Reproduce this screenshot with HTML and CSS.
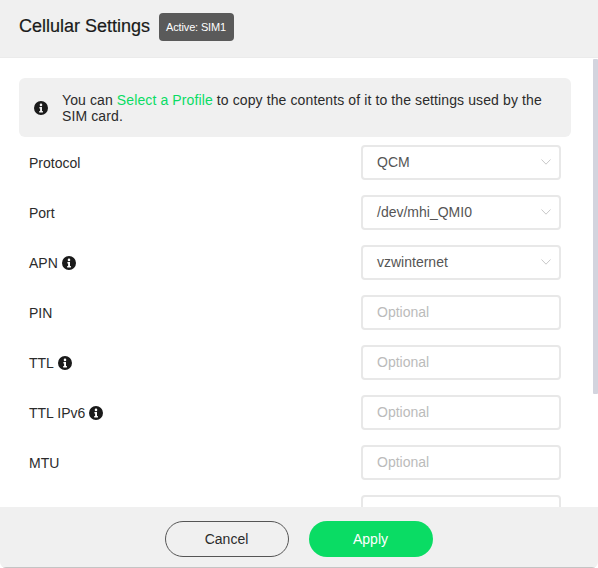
FILE: index.html
```html
<!DOCTYPE html>
<html lang="en">
<head>
    <meta charset="UTF-8">
    <meta name="viewport" content="width=device-width, initial-scale=1.0">
    <title>Cellular Settings</title>
    <link rel="stylesheet" href="styles.css">
</head>
<body>
    <svg class="icon-defs" width="0" height="0">
        <symbol id="info" viewBox="0 0 14 14">
            <path fill-rule="evenodd" d="M7 0a7 7 0 1 0 0 14A7 7 0 0 0 7 0ZM7 2.6a1.3 1.3 0 1 1 0 2.6 1.3 1.3 0 0 1 0-2.6ZM5.4 6h2.6v4h.9v1.4H5.2V10h.9V7.4h-.7Z"/>
        </symbol>
        <symbol id="chevron" viewBox="0 0 10 6">
            <path d="M0.5 0.5 5 5.2 9.5 0.5" fill="none" stroke="#c8c8c8" stroke-width="1"/>
        </symbol>
    </svg>
    <div class="modal">
        <header class="modal-header">
            <h1>Cellular Settings</h1>
            <span class="badge">Active: SIM1</span>
        </header>
        <div class="modal-main">
            <div class="modal-body">
                <div class="notice">
                    <svg class="notice-icon"><use href="#info"/></svg>
                    <p>You can <a href="#">Select a Profile</a> to copy the contents of it to the settings used by the SIM card.</p>
                </div>
                <form class="settings">
                    <div class="row">
                        <label>Protocol</label>
                        <div class="control select">QCM<svg class="chevron"><use href="#chevron"/></svg></div>
                    </div>
                    <div class="row">
                        <label>Port</label>
                        <div class="control select">/dev/mhi_QMI0<svg class="chevron"><use href="#chevron"/></svg></div>
                    </div>
                    <div class="row">
                        <label>APN <svg class="hint"><use href="#info"/></svg></label>
                        <div class="control select">vzwinternet<svg class="chevron"><use href="#chevron"/></svg></div>
                    </div>
                    <div class="row">
                        <label>PIN</label>
                        <input class="control" type="text" placeholder="Optional">
                    </div>
                    <div class="row">
                        <label>TTL <svg class="hint"><use href="#info"/></svg></label>
                        <input class="control" type="text" placeholder="Optional">
                    </div>
                    <div class="row">
                        <label>TTL IPv6 <svg class="hint"><use href="#info"/></svg></label>
                        <input class="control" type="text" placeholder="Optional">
                    </div>
                    <div class="row">
                        <label>MTU</label>
                        <input class="control" type="text" placeholder="Optional">
                    </div>
                    <div class="row">
                        <label>Auth</label>
                        <div class="control select">NONE<svg class="chevron"><use href="#chevron"/></svg></div>
                    </div>
                </form>
            </div>
            <div class="scroll-thumb"></div>
        </div>
        <footer class="modal-footer">
            <button class="btn btn-cancel" type="button">Cancel</button>
            <button class="btn btn-apply" type="button">Apply</button>
        </footer>
    </div>
</body>
</html>
```

FILE: styles.css
```css
* {
    box-sizing: border-box;
}
body {
    margin: 0;
    font-family: "Liberation Sans", Arial, sans-serif;
    font-size: 14px;
    color: #2b2b2b;
    background-color: #fff;
}
.icon-defs {
    display: block;
    height: 0;
}
.modal {
    height: 568px;
    display: flex;
    flex-direction: column;
    overflow: hidden;
    border-radius: 0 0 6px 6px;
}
.modal-header {
    height: 58px;
    flex: none;
    display: flex;
    align-items: center;
    gap: 9px;
    padding: 0 19px 4px;
    background-color: #f0f0f0;
    border-bottom: 1px solid #ebebeb;
}
.modal-header h1 {
    margin: 0;
    font-size: 18px;
    font-weight: normal;
    color: #1a1a1a;
    -webkit-text-stroke: 0.2px #1a1a1a;
}
.badge {
    height: 28px;
    width: 75px;
    padding: 0 7px;
    display: flex;
    align-items: center;
    font-size: 11px;
    letter-spacing: -0.15px;
    white-space: nowrap;
    color: #fff;
    background-color: #5a5a5a;
    border-radius: 4px;
}
.modal-main {
    flex: 1;
    min-height: 0;
    position: relative;
}
.modal-body {
    height: 100%;
    overflow: hidden;
    padding: 20px 27px 20px 19px;
}
.scroll-thumb {
    position: absolute;
    top: 1px;
    right: 0;
    width: 5px;
    height: 335px;
    background-color: #d3d4de;
    border-radius: 1px;
}
.notice {
    display: flex;
    align-items: center;
    gap: 14px;
    height: 59px;
    padding: 0 15px;
    background-color: #f0f0f0;
    border-radius: 6px;
}
.notice-icon {
    width: 14px;
    height: 14px;
    flex: none;
    fill: #1a1a1a;
}
.notice p {
    margin: 0;
    line-height: 16px;
    letter-spacing: 0.11px;
}
.notice a {
    color: #0adc64;
    text-decoration: none;
}
.settings {
    padding: 8px 10px 0;
}
.row {
    display: flex;
    align-items: center;
    justify-content: space-between;
    height: 35px;
    margin-bottom: 15px;
}
.row label {
    display: flex;
    align-items: center;
    gap: 4px;
}
.hint {
    width: 14px;
    height: 14px;
    fill: #1a1a1a;
}
.control {
    width: 200px;
    height: 35px;
    padding: 0 14px 2px;
    font-family: inherit;
    font-size: 14px;
    color: #555;
    background-color: #fff;
    border: 2px solid #e8e8e8;
    border-radius: 4px;
    outline: none;
}
.control::placeholder {
    color: #bbb;
}
.select {
    display: flex;
    align-items: center;
    justify-content: space-between;
}
.chevron {
    width: 10px;
    height: 6px;
    margin-right: -6px;
}
.modal-footer {
    height: 61px;
    flex: none;
    display: flex;
    align-items: center;
    justify-content: center;
    gap: 20px;
    padding-top: 3px;
    padding-right: 1px;
    background-color: #f0f0f0;
    border-bottom: 1px solid #c4c4c4;
}
.btn {
    width: 124px;
    height: 36px;
    font-family: inherit;
    font-size: 14px;
    border-radius: 18px;
    cursor: pointer;
}
.btn-cancel {
    color: #2b2b2b;
    background-color: transparent;
    border: 1px solid #555;
}
.btn-apply {
    color: #fff;
    background-color: #0adc64;
    border: none;
}
```
